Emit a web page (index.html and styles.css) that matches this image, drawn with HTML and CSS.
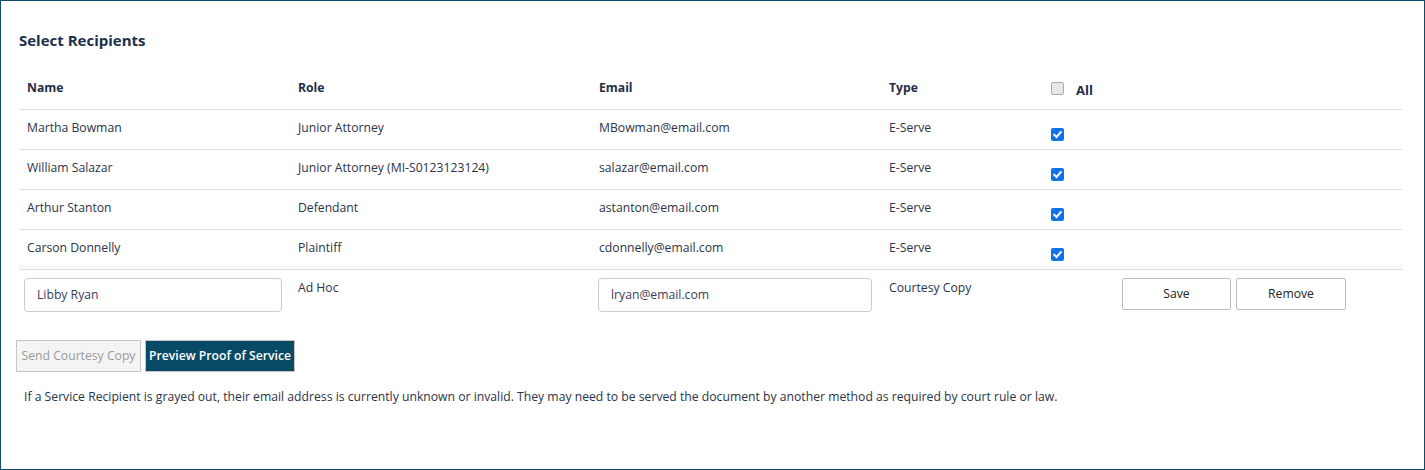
FILE: index.html
```html
<!DOCTYPE html>
<html>
<head>
<meta charset="utf-8">
<link rel="stylesheet" href="styles.css">
</head>
<body>
<div class="frame">
  <h2 class="title">Select Recipients</h2>
  <table class="recipients">
    <colgroup>
      <col class="c-name"><col class="c-role"><col class="c-email"><col class="c-type"><col class="c-check">
    </colgroup>
    <thead>
      <tr>
        <th>Name</th>
        <th>Role</th>
        <th>Email</th>
        <th>Type</th>
        <th class="check-head"><div class="head-wrap"><span class="cb cb-empty"></span><span class="all">All</span></div></th>
      </tr>
    </thead>
    <tbody>
      <tr>
        <td>Martha Bowman</td><td>Junior Attorney</td><td>MBowman@email.com</td><td>E-Serve</td>
        <td class="check-cell"><span class="cb cb-on"><svg viewBox="0 0 13 13"><path d="M3.2 6.8 L5.5 9 L9.8 4.2" /></svg></span></td>
      </tr>
      <tr>
        <td>William Salazar</td><td>Junior Attorney (MI-S0123123124)</td><td>salazar@email.com</td><td>E-Serve</td>
        <td class="check-cell"><span class="cb cb-on"><svg viewBox="0 0 13 13"><path d="M3.2 6.8 L5.5 9 L9.8 4.2" /></svg></span></td>
      </tr>
      <tr>
        <td>Arthur Stanton</td><td>Defendant</td><td>astanton@email.com</td><td>E-Serve</td>
        <td class="check-cell"><span class="cb cb-on"><svg viewBox="0 0 13 13"><path d="M3.2 6.8 L5.5 9 L9.8 4.2" /></svg></span></td>
      </tr>
      <tr class="last">
        <td>Carson Donnelly</td><td>Plaintiff</td><td>cdonnelly@email.com</td><td>E-Serve</td>
        <td class="check-cell"><span class="cb cb-on"><svg viewBox="0 0 13 13"><path d="M3.2 6.8 L5.5 9 L9.8 4.2" /></svg></span></td>
      </tr>
      <tr class="adhoc">
        <td class="name-in"><input class="field field-name" type="text" value="Libby Ryan"></td>
        <td>Ad Hoc</td>
        <td class="email-in"><input class="field field-email" type="text" value="lryan@email.com"></td>
        <td>Courtesy Copy</td>
        <td class="actions"><button class="btn btn-plain btn-save">Save</button><button class="btn btn-plain btn-remove">Remove</button></td>
      </tr>
    </tbody>
  </table>
  <div class="bar">
    <button class="btn btn-disabled">Send Courtesy Copy</button><button class="btn btn-primary">Preview Proof of Service</button>
  </div>
  <p class="note">If a Service Recipient is grayed out, their email address is currently unknown or invalid. They may need to be served the document by another method as required by court rule or law.</p>
</div>
</body>
</html>
```

FILE: styles.css
```css
html, body {
  margin: 0;
  padding: 0;
  background: #ffffff;
}
body {
  font-family: "Open Sans", "Noto Sans", sans-serif;
  font-size: 12.2px;
  color: #2c3348;
}
.frame {
  box-sizing: border-box;
  width: 1425px;
  height: 470px;
  border: 1px solid #0d4d69;
  padding: 29px 22px 0 18px;
}
.title {
  margin: 0;
  font-size: 15px;
  line-height: 20px;
  font-weight: 700;
  color: #1c2f4b;
}
.recipients {
  margin-top: 19px;
  width: 1383px;
  border-collapse: collapse;
  table-layout: fixed;
}
.c-name { width: 271px; }
.c-role { width: 301px; }
.c-email { width: 290px; }
.c-type { width: 162px; }
.recipients th,
.recipients td {
  box-sizing: border-box;
  height: 40px;
  text-align: left;
  vertical-align: top;
  padding: 8px 8px 11px;
  line-height: 20px;
  border-bottom: 1px solid #dedede;
  white-space: nowrap;
}
.recipients th {
  font-weight: 700;
  color: #1f2d48;
  padding-top: 9px;
  padding-bottom: 10px;
}
.head-wrap {
  display: flex;
  align-items: center;
  padding-top: 4px;
}
.all {
  margin-left: 12px;
  font-size: 13px;
  line-height: 13px;
  position: relative;
  top: 2px;
}
.cb {
  display: block;
  box-sizing: border-box;
  width: 13px;
  height: 13px;
  border-radius: 2px;
  flex: none;
}
.cb-empty {
  background: #e8e8e8;
  border: 1px solid #a9a9a9;
}
.cb-on {
  background: #0f74e8;
}
.cb-on svg {
  display: block;
  width: 13px;
  height: 13px;
}
.cb-on path {
  fill: none;
  stroke: #ffffff;
  stroke-width: 2;
  stroke-linecap: square;
}
.recipients td.check-cell {
  padding-top: 18px;
  padding-bottom: 8px;
}
.recipients tr.last td {
  background: linear-gradient(to bottom, #ffffff 0, #ffffff 35px, #f7f7f7 35px);
}
.recipients tr.adhoc td {
  border-bottom: none;
  padding-bottom: 8px;
  height: auto;
}
.recipients td.name-in { padding-left: 5px; }
.recipients td.email-in { padding-left: 7px; }
.field {
  box-sizing: border-box;
  height: 34px;
  border: 1px solid #cccccc;
  border-radius: 4px;
  font-family: "Open Sans", "Noto Sans", sans-serif;
  font-size: 12.2px;
  color: #3a3f55;
  padding: 0 12px;
  display: block;
  outline: none;
}
.field-name { width: 258px; }
.field-email { width: 274px; }
.recipients td.actions {
  padding-left: 79px;
}
.btn {
  box-sizing: border-box;
  height: 32px;
  font-family: "Open Sans", "Noto Sans", sans-serif;
  font-size: 12.2px;
  border-radius: 0;
  padding: 0;
  vertical-align: top;
  white-space: nowrap;
}
.btn-plain {
  background: #ffffff;
  border: 1px solid #bdbdbd;
  color: #222222;
  border-radius: 2px;
  height: 32px;
}
.btn-save { width: 109px; }
.btn-remove { width: 110px; margin-left: 5px; }
.bar {
  margin-top: 20px;
  margin-left: -3px;
  display: flex;
  gap: 4px;
}
.btn-disabled {
  width: 125px;
  background: #f4f4f4;
  border: 1px solid #c6c6c6;
  color: #9a9a9a;
}
.btn-primary {
  width: 150px;
  background: #074a66;
  border: 1px solid #c6c6c6;
  color: #ffffff;
  font-weight: 600;
}
.note {
  margin: 15px 0 0 5px;
  line-height: 20px;
  white-space: nowrap;
}
```
